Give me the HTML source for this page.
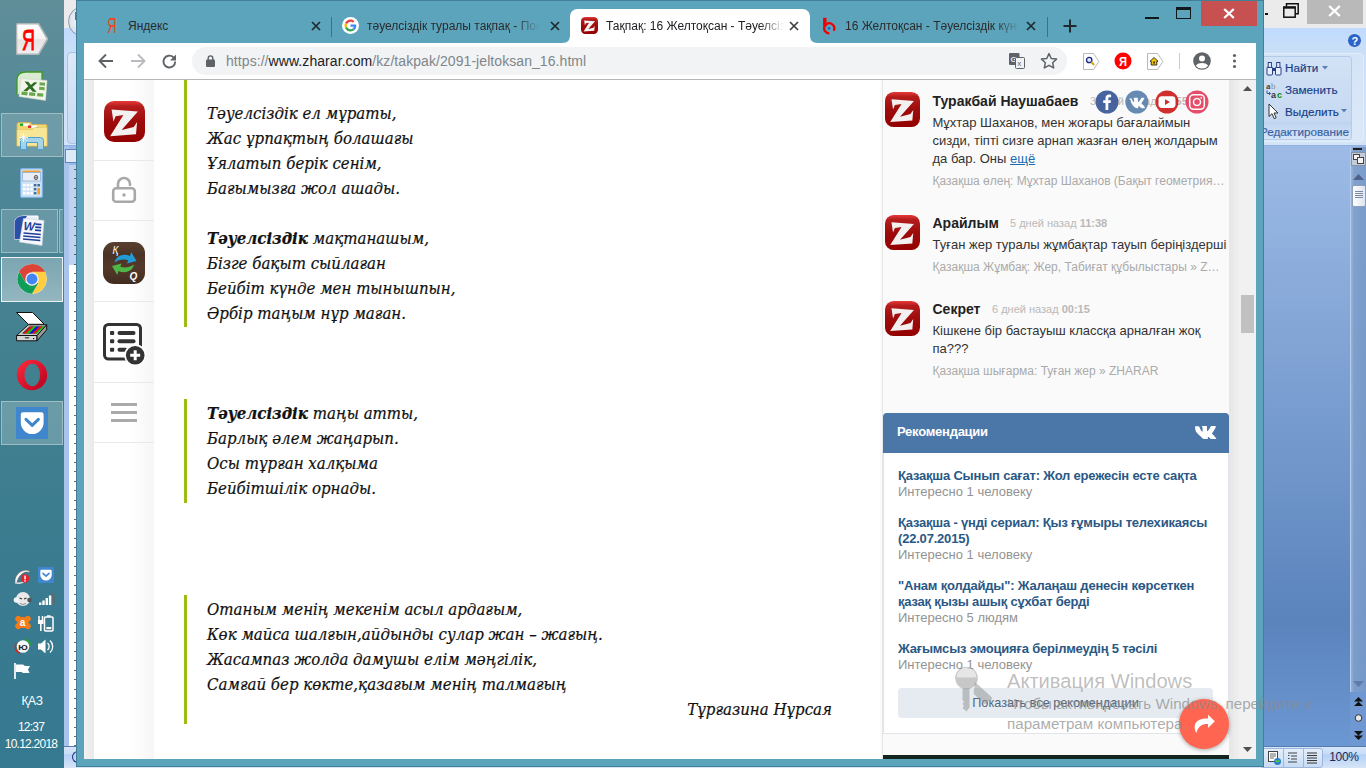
<!DOCTYPE html>
<html lang="kk">
<head>
<meta charset="utf-8">
<title>Тақпақ: 16 Желтоқсан - Тәуелсіздік күні</title>
<style>
*{box-sizing:border-box;margin:0;padding:0}
html,body{width:1366px;height:768px;overflow:hidden}
body{position:relative;font-family:"Liberation Sans",sans-serif;background:#6f96cc}
.abs{position:absolute}
/* ===== taskbar ===== */
#taskbar{left:0;top:0;width:64px;height:768px;background:linear-gradient(180deg,#5f8e99 0%,#4c8595 25%,#41808f 50%,#3a7b90 75%,#357990 100%)}
.tb-hl{left:1px;width:62px;height:45px;border:1px solid rgba(255,255,255,.35);background:rgba(255,255,255,.16)}
#taskbar .t{color:#fff;font-size:12px;width:64px;text-align:center;left:0;white-space:nowrap}
/* ===== word ===== */
#word{z-index:0;left:64px;top:0;width:1302px;height:768px;background:linear-gradient(180deg,#9dbbe6 146px,#5b84bd 620px,#6b97d2 746px)}
#w-title{left:0;top:0;width:1302px;height:28px;background:#ebebeb}
#w-ribbon{left:0;top:28px;width:1302px;height:118px;background:linear-gradient(180deg,#bfdbff 0,#c9dff8 20px,#d3e4f8 100%);border-bottom:1px solid #8db2e3}
#w-status{left:0;top:746px;width:1302px;height:22px;background:linear-gradient(180deg,#d7e6f9 0,#c7dcf8 35%,#b3d0f5 36%,#d7e5f7 100%);border-top:1px solid #567db0}
.wr{font-size:11.700px;margin-top:.3px;line-height:15px;color:#163d88;-webkit-text-stroke:.15px #163d88;white-space:nowrap}
/* ===== chrome ===== */
#chrome{left:76px;top:0;width:1188px;height:767px;background:#5ca3bc;box-shadow:inset 0 0 0 1px #417f96}
#toolbar{left:8px;top:43px;width:1172px;height:37px;background:#fff;border-bottom:1px solid #b6b6b6}
#omni{left:108px;top:4px;width:875px;height:28px;border-radius:14px;background:#f1f3f4}
#url{left:34px;top:5px;font-size:14px;line-height:18px;color:#80868b;white-space:nowrap;letter-spacing:.07px}
#url b{font-weight:normal;color:#202124}
.tab{top:9px;height:34px;font-size:12px;color:#2b2b2b;white-space:nowrap}
.tab .tt{position:absolute;top:9px;line-height:16px;overflow:hidden}
.tab .fade{-webkit-mask-image:linear-gradient(90deg,#000 0,#000 calc(100% - 24px),transparent 100%);mask-image:linear-gradient(90deg,#000 0,#000 calc(100% - 24px),transparent 100%)}
#page{left:8px;top:80px;width:1172px;height:679px;background:#fff;overflow:hidden}
/* page */
#lstrip{left:0;top:0;width:10px;height:679px;background:linear-gradient(90deg,#f2f2f2,#e9e9e9)}
#side{left:10px;top:0;width:60px;height:679px;background:linear-gradient(90deg,#fff 0,#fff 60%,#f6f6f6 100%)}
#side i{position:absolute;left:0;width:60px;height:1px;background:#e9e9e9}
.bar{left:100px;width:3px;background:#9bbd14}
.poem{left:123px;margin-top:0;-webkit-text-stroke:.2px #111;font:italic 16.7px/25px "DejaVu Serif Condensed","Liberation Serif",serif;color:#111;white-space:nowrap}
.poem b{font-weight:bold}
#rcol{left:796px;top:0;width:349px;height:679px;background:#fafafa}
.cm-name{font-weight:bold;font-size:14px;color:#222;white-space:nowrap}
.cm-date{font-size:11px;color:#b9b9b9;white-space:nowrap}
.cm-text{font-size:13px;line-height:18px;color:#333;white-space:nowrap}
.cm-src{font-size:12px;color:#aaa;white-space:nowrap}
.av{width:35px;height:35px}
#vk{left:799px;top:333px;width:346px;height:321px;background:#fff;border:1px solid #e1e5eb;border-top:none;border-radius:4px 4px 0 0}
#vk-h{left:-1px;top:0;width:346px;height:40px;background:#4a76a8;border-radius:4px 4px 0 0}
.vk-t{left:14px;font-weight:bold;font-size:13px;line-height:16px;color:#2a5885;letter-spacing:-.2px;white-space:nowrap}
.vk-s{left:14px;font-size:13px;line-height:16px;color:#939393;white-space:nowrap}
#sb{left:1155px;top:0;width:17px;height:679px;background:#f1f1f1}
</style>
</head>
<body>
<svg width="0" height="0" style="position:absolute"><defs>
<linearGradient id="zg" x1="0" y1="0" x2="0" y2="1"><stop offset="0" stop-color="#e83a3a"/><stop offset=".13" stop-color="#b51d1d"/><stop offset=".5" stop-color="#9d0c0c"/><stop offset="1" stop-color="#940000"/></linearGradient>
<g id="zlogo"><rect x="0" y="0" width="41" height="41" rx="10" fill="url(#zg)"/><path d="M7.600 8.500L33.900 10.400 17.600 28.900 29.800 25.900 33.100 21.100 32 33.300 6.100 35.200 19.400 14.100 11.600 15.200 9.400 20.400z" fill="#f3f0f0"/></g>
</defs></svg>
<div id="word" class="abs">
  <div id="w-title" class="abs">
    <div class="abs" style="left:4px;top:6px;width:31px;height:31px;border-radius:16px;background:radial-gradient(circle at 50% 45%,#fff 0,#e3e8f1 55%,#c3ccdc 100%);border:1px solid #8d99b0;z-index:2"></div><div class="abs" style="left:11px;top:12px;width:2px;height:8px;background:#d8491b;z-index:3"></div>
    <div class="abs" style="left:1243px;top:0;width:56px;height:24px;background:#b9b9b9"></div>
    <svg class="abs" style="left:1264px;top:5px" width="13" height="12" viewBox="0 0 13 12"><path d="M1.200 1l10.600 10M11.800 1L1.200 11" stroke="#fff" stroke-width="2.300" fill="none"/></svg>
    <svg class="abs" style="left:1219px;top:3px" width="16" height="15" viewBox="0 0 16 15"><path d="M3.500 3.500V.8h11.700v10h-3" fill="none" stroke="#111" stroke-width="1.500"/><rect x=".8" y="4" width="11.400" height="10.200" fill="#ebebeb" stroke="#111" stroke-width="1.500"/><path d="M.8 4.700h11.400" stroke="#111" stroke-width="2"/></svg>
    <div class="abs" style="left:1201px;top:13px;width:3px;height:2px;background:#111"></div>
  </div>
  <div id="w-ribbon" class="abs">
    <div class="abs" style="left:3px;top:24px;width:12px;height:92px;border:1px solid #a9c3e6;border-radius:4px;background:linear-gradient(180deg,#dce9f8,#c6daf3)"></div>
    <svg class="abs" style="left:1283px;top:5px" width="15" height="15" viewBox="0 0 15 15"><circle cx="7.500" cy="7.500" r="7" fill="#2c63c9" stroke="#dbe6f7" stroke-width="1"/><text x="4.400" y="11.500" font-family="Liberation Sans,sans-serif" font-weight="bold" font-size="11" fill="#fff">?</text></svg>
    <div class="abs" style="left:1190px;top:25px;width:110px;height:89px;border:1px solid #e4eefb;border-radius:4px;background:linear-gradient(180deg,#d4e4f7,#dbe8f8)"></div>
    <div class="abs" style="left:1190px;top:28px;width:98px;height:84px;border:1px solid #b4cbe9;border-radius:3px;background:linear-gradient(180deg,#d2e2f6 0,#c6d9f1 78%,#bed4ef 79%,#d5e4f7 100%)"></div>
    <!-- find -->
    <svg class="abs" style="left:1202px;top:33px" width="16" height="15" viewBox="0 0 16 15"><g fill="#eaf0fb" stroke="#27408b" stroke-width="1"><rect x="1" y="6" width="5.500" height="8" rx="1"/><rect x="9.500" y="6" width="5.500" height="8" rx="1"/><rect x="2.200" y="1.500" width="3.200" height="5"/><rect x="10.700" y="1.500" width="3.200" height="5"/></g><rect x="6.500" y="7" width="3" height="3" fill="#27408b"/></svg>
    <div class="abs wr" style="left:1221px;top:32px">Найти</div>
    <svg class="abs" style="left:1258px;top:38px" width="6" height="4" viewBox="0 0 6 4"><path d="M0 0h6L3 3.500z" fill="#5d7fb8"/></svg>
    <!-- replace -->
    <svg class="abs" style="left:1202px;top:54px" width="17" height="17" viewBox="0 0 17 17"><text x="0" y="7" font-family="Liberation Serif,serif" font-weight="bold" font-size="9" fill="#444">a</text><text x="5" y="7" font-family="Liberation Serif,serif" font-size="9" fill="#888">b</text><text x="5" y="15.500" font-family="Liberation Sans,sans-serif" font-weight="bold" font-size="9" fill="#333">a</text><text x="11" y="15.500" font-family="Liberation Sans,sans-serif" font-weight="bold" font-size="9" fill="#0a8a0a">c</text><path d="M1 8.500v3h3.500M3 10l1.500 1.500L3 13" stroke="#3a5a9a" stroke-width="1" fill="none"/></svg>
    <div class="abs wr" style="left:1221px;top:54px">Заменить</div>
    <!-- select -->
    <svg class="abs" style="left:1204px;top:75px" width="11" height="17" viewBox="0 0 11 17"><path d="M1 1v12.500l3-2.800 2.200 5 2-.9-2.200-4.800H10z" fill="#fff" stroke="#333" stroke-width="1"/></svg>
    <div class="abs wr" style="left:1221px;top:76px">Выделить</div>
    <svg class="abs" style="left:1277px;top:81px" width="6" height="4" viewBox="0 0 6 4"><path d="M0 0h6L3 3.500z" fill="#5d7fb8"/></svg>
    <div class="abs wr" style="left:1196px;top:96px;color:#3e6aaa">Редактирование</div>
  </div>
  <!-- left ruler strip -->
  <div class="abs" style="left:0;top:147px;width:5px;height:599px;background:#a9c4ea"></div>
  <div class="abs" style="left:5px;top:165px;width:8px;height:100px;background:#bfd3f0"></div>
  <div class="abs" style="left:5px;top:265px;width:8px;height:481px;background:#fff"></div>
  <div class="abs" style="left:5px;top:165px;left:10px;width:2px;height:581px;background:repeating-linear-gradient(180deg,transparent 0,transparent 4px,#444 4px,#444 5px,transparent 5px,transparent 9.450px);opacity:.8"></div>
  <div class="abs" style="left:1px;top:149px;width:14px;height:14px;border:1px solid #5f86c4;background:#dfeaf8"></div>
  <!-- right scrollbar -->
  <div class="abs" style="left:1286px;top:147px;width:16px;height:599px;background:linear-gradient(90deg,#9fbbe2 0,#7f9fcb 25%,#7699c8 100%);opacity:.9"></div>
  <div class="abs" style="left:1286px;top:147px;width:1px;height:599px;background:#b5cbea"></div>
  <div class="abs" style="left:1289px;top:148px;width:9px;height:2px;background:#1e1e1e"></div>
  <div class="abs" style="left:1287px;top:152px;width:15px;height:14px;background:#c5ccd8;border:1px solid #8492aa"></div><div class="abs" style="left:1289px;top:154px;width:7px;height:6px;background:#f4f4f4;border:1px solid #444"></div><div class="abs" style="left:1293px;top:157px;width:7px;height:7px;background:#f4f4f4;border:1px solid #444"></div>
  <svg class="abs" style="left:1289px;top:174px" width="11" height="6" viewBox="0 0 11 6"><path d="M0 6L5.500 0 11 6z" fill="#4f638a"/></svg>
  <div class="abs" style="left:1288px;top:185px;width:14px;height:22px;background:linear-gradient(90deg,#fdfdfd,#dfe5ee);border:1px solid #8c9fbd;border-radius:2px"></div>
  <div class="abs" style="left:1291px;top:191px;width:8px;height:7px;background:repeating-linear-gradient(180deg,#7a8aa5 0,#7a8aa5 1px,transparent 1px,transparent 2px)"></div>
  <svg class="abs" style="left:1289px;top:681px" width="11" height="6" viewBox="0 0 11 6"><path d="M0 0L5.500 6 11 0z" fill="#5f7aa8"/></svg>
  <div class="abs" style="left:1286px;top:692px;width:16px;height:54px;background:#6f98d3"></div>
  <svg class="abs" style="left:1290px;top:697px" width="9" height="44" viewBox="0 0 9 44"><path d="M0 4.500L4.500 0 9 4.500zM0 9L4.500 4.500 9 9z" fill="#111"/><circle cx="4.500" cy="21" r="3.300" fill="#e8e8e8" stroke="#333" stroke-width="1"/><path d="M0 34L4.500 38.500 9 34zM0 38.500L4.500 43 9 38.500z" fill="#111"/></svg>
  <div id="w-status" class="abs">
    <div class="abs" style="left:8px;top:4px;width:9px;height:12px;border:1.500px solid #1a2f8a;border-right:none;border-radius:6px 0 0 6px"></div>
    <div class="abs" style="left:1196px;top:1px;width:63px;height:20px;border:1px solid #9db7dc;border-radius:3px;background:linear-gradient(180deg,#e4eefa,#c9dcf5)"></div>
    <div class="abs" style="left:1219px;top:2px;width:1px;height:18px;background:#9db7dc"></div>
    <div class="abs" style="left:1239px;top:2px;width:1px;height:18px;background:#9db7dc"></div>
    <svg class="abs" style="left:1204px;top:4px" width="54" height="15" viewBox="0 0 54 15"><rect x=".5" y=".5" width="9" height="10" fill="#fff" stroke="#444"/><path d="M2 3h6M2 5h6M2 7h4" stroke="#666" stroke-width="1"/><circle cx="9.500" cy="10.500" r="3.500" fill="#2a7fd0"/><path d="M7.500 9.500q2 2 4 0" stroke="#6c3" stroke-width="1.200" fill="none"/><path d="M20 2h9M23 5h6M23 8h6M20 11h9" stroke="#444" stroke-width="1.200"/><path d="M20 4.500h1.500M20 7.500h1.500" stroke="#444" stroke-width="1"/><path d="M39 2h10M39 4.500h10M39 7h10M39 9.500h10M39 12h10" stroke="#333" stroke-width="1.200"/></svg>
    <div class="abs" style="left:1262px;top:2px;width:36px;text-align:center;font-size:12px;line-height:17px;color:#15285a;letter-spacing:-.3px">100%</div>
  </div>
</div>
<div id="taskbar" class="abs">
  <!-- highlights -->
  <div class="abs tb-hl" style="top:113px;height:44px"></div>
  <div class="abs tb-hl" style="top:209px;height:44px;width:57px"></div>
  <div class="abs tb-hl" style="top:209px;height:44px;left:59px;width:4px;border-right:none"></div>
  <div class="abs tb-hl" style="top:257px;height:45px;border:1px solid rgba(255,255,255,.85);background:linear-gradient(180deg,rgba(255,255,255,.28),rgba(255,255,255,.42))"></div>
  <div class="abs tb-hl" style="top:401px;height:44px;background:rgba(255,255,255,.22)"></div>
  <!-- yandex -->
  <svg class="abs" style="left:16px;top:23px" width="32" height="32" viewBox="0 0 32 32"><defs><linearGradient id="yg" x1="0" y1="0" x2="0" y2="1"><stop offset="0" stop-color="#fff"/><stop offset=".5" stop-color="#f4f4f4"/><stop offset=".52" stop-color="#e4e4e4"/><stop offset="1" stop-color="#efefef"/></linearGradient></defs><path d="M2 .7h20.500l9 15.300-9 15.300H2a1.500 1.500 0 0 1-1.500-1.500V2.200A1.500 1.500 0 0 1 2 .7z" fill="url(#yg)" stroke="#aeb4b7" stroke-width="1.600"/><text x="6" y="26.500" font-family="Liberation Sans,sans-serif" font-size="29" fill="#f00" stroke="#f00" stroke-width=".9" textLength="13" lengthAdjust="spacingAndGlyphs">Я</text></svg>
  <!-- excel -->
  <svg class="abs" style="left:16px;top:71px" width="32" height="31" viewBox="0 0 32 31"><path d="M1 24V9Q1 1 10 1H26V8" fill="#d9ecd2" stroke="#3f9b1f" stroke-width="1.300"/><path d="M5 7.500L31 9.500 29.500 29.500 3 25.500z" fill="#f1f5ea" stroke="#cfd8c4" stroke-width=".6"/><path d="M8.500 10.500l3.800.3 2.600 3.300 3.200-2.900 3.400.3-5.100 4.600 4.300 4.900-4.300-.4-2.400-3-3 2.600-3.700-.3 5.100-4.700z" fill="#2c6b22"/><g fill="#6aa84f"><rect x="23.500" y="11.500" width="5.500" height="3" transform="rotate(4 26 13)"/><rect x="23.200" y="16" width="5.500" height="3" transform="rotate(4 26 17)"/><rect x="5.500" y="20.800" width="6" height="3.300" transform="rotate(5 8 22)"/><rect x="13.200" y="21.500" width="6" height="3.300" transform="rotate(5 16 23)"/><rect x="21.200" y="22.200" width="6" height="3.300" transform="rotate(5 24 24)"/></g></svg>
  <!-- explorer -->
  <svg class="abs" style="left:16px;top:121px" width="32" height="30" viewBox="0 0 32 30"><path d="M1 3.500Q1 1.500 3 1.500h11.500l1.500 2h14Q31 3.500 31 5.500V25H1z" fill="#f1d674" stroke="#d5b24c" stroke-width=".8"/><rect x="4" y="2.500" width="9" height="2.400" fill="#fff"/><rect x="4" y="2.500" width="3.200" height="2.400" fill="#18a818"/><rect x="12" y="4.500" width="9" height="2.400" fill="#fff"/><rect x="12" y="4.500" width="3.200" height="2.400" fill="#d22"/><rect x="20" y="6.500" width="9" height="2.400" fill="#fff"/><rect x="20" y="6.500" width="3.200" height="2.400" fill="#1c7fe0"/><path d="M1 8.500h15.500l2-2H31V25H1z" fill="#f8e697" stroke="#e0c25c" stroke-width=".6"/><path d="M4.500 28.500V19.500Q4.500 16.500 7.500 16.500h17Q27.500 16.500 27.500 19.500V28.500H21.500V21.500H10.500V28.500z" fill="#9fd4ee" stroke="#4f9fd0" stroke-width="1" fill-opacity=".92"/><path d="M7.500 12v9M3 16.500h9M4.500 13.500l6 6M10.500 13.500l-6 6" stroke="#fff" stroke-width=".9" opacity=".9"/></svg>
  <!-- calc -->
  <svg class="abs" style="left:20px;top:168px" width="23" height="30" viewBox="0 0 23 30"><rect x=".6" y=".6" width="21.800" height="28.800" rx="1.500" fill="#cfe3f6" stroke="#7fb0e0" stroke-width="1.200"/><rect x="2.500" y="2.500" width="18" height="2" fill="#f2a33c"/><rect x="2.500" y="4.500" width="18" height="8.500" fill="#e6eff8" stroke="#8aa6c4" stroke-width=".7"/><text x="13.500" y="11.700" font-family="Liberation Mono,monospace" font-weight="bold" font-size="8" fill="#41506b">0</text><g fill="#fff"><rect x="3" y="16" width="2.600" height="2.400"/><rect x="6.600" y="16" width="2.600" height="2.400"/><rect x="10.200" y="16" width="2.600" height="2.400"/><rect x="3" y="20" width="2.600" height="2.400"/><rect x="6.600" y="20" width="2.600" height="2.400"/><rect x="10.200" y="20" width="2.600" height="2.400"/><rect x="3" y="24" width="2.600" height="2.400"/><rect x="6.600" y="24" width="2.600" height="2.400"/><rect x="10.200" y="24" width="2.600" height="2.400"/></g><g fill="#3f6f9f"><rect x="13.800" y="16" width="2.600" height="2.400"/><rect x="17.400" y="16" width="2.600" height="2.400"/><rect x="13.800" y="20" width="2.600" height="2.400"/><rect x="13.800" y="24" width="2.600" height="2.400"/></g><rect x="17.400" y="20" width="2.600" height="6.400" fill="#f29a2e"/></svg>
  <!-- word -->
  <svg class="abs" style="left:13px;top:215px" width="32" height="31" viewBox="0 0 32 31"><path d="M1.500 24V9Q1.500 1 10.500 1H25V24z" fill="#e9eef8" stroke="#fff" stroke-width="1"/><path d="M1.500 24V9Q1.500 1 10.500 1H14Q8 8 8.500 24z" fill="#2a4fa8"/><path d="M10.500 3.500L31 5.500 29 30.500 6.500 27z" fill="#f6f8fc" stroke="#cfd6e4" stroke-width=".6"/><text x="10.500" y="15.500" font-family="Liberation Sans,sans-serif" font-weight="bold" font-style="italic" font-size="12" fill="#1f3f9a" transform="rotate(4 16 12)">W</text><g stroke="#1f3f9a" stroke-width="1.700"><path d="M22.500 9.200l6 .5M22.300 12.200l6 .5M22 15.200l6 .5M10.500 18l17.300 1.500M10.200 21l17.300 1.500M10 24l17.300 1.500"/></g></svg>
  <!-- chrome -->
  <svg class="abs" style="left:17px;top:264px" width="30" height="30" viewBox="0 0 48 48"><circle cx="24" cy="24" r="23.500" fill="#fff"/><path d="M24 24L3.700 12.300A23.500 23.500 0 0 1 44.300 12.300z" fill="#db4437"/><path d="M24 .5A23.500 23.500 0 0 1 44.350 12.250H24z" fill="#db4437"/><path d="M3.650 12.250A23.500 23.500 0 0 1 44.350 12.250H24L13.800 29.900z" fill="#db4437"/><path d="M44.350 12.250A23.500 23.500 0 0 1 24 47.500L34.200 29.900 24 12.250z" fill="#ffcd40"/><path d="M24 47.500A23.500 23.500 0 0 1 3.650 12.250L13.800 29.900 34.200 29.900z" fill="#0f9d58"/><circle cx="24" cy="24" r="10.800" fill="#f1f1f1"/><circle cx="24" cy="24" r="8.700" fill="#4285f4"/></svg>
  <!-- scanner -->
  <svg class="abs" style="left:15px;top:311px" width="34" height="32" viewBox="0 0 34 32"><path d="M1.500 1.500h16l11.800 11.800H13.300z" fill="#fff" stroke="#111" stroke-width="1"/><path d="M1.600 24.500L13.200 13.800h18.500L22 24.500z" fill="#c9c9c9" stroke="#111" stroke-width="1"/><path d="M1.600 24.500H22v5.300H1.600z" fill="#d4d4d4" stroke="#111" stroke-width="1"/><path d="M22 24.500L31.700 13.800v5L22 29.800z" fill="#9a9a9a" stroke="#111" stroke-width="1"/><path d="M7 22.500l7.500-7h15L22 22.500z" fill="#222"/><path d="M8 22.500l7.500-7h3l-7.500 7z" fill="#e11"/><path d="M11 22.500l7.500-7h3l-7.500 7z" fill="#1c1"/><path d="M14 22.500l7.500-7h3l-7.500 7z" fill="#11e"/><path d="M17 22.500l7.500-7h3l-7.500 7z" fill="#e11"/><path d="M20 22.500l7.500-7h2L22 22.500z" fill="#1c1"/><path d="M10 26l1 1.500 1-1.500 1 1.500 1-1.500" stroke="#111" stroke-width=".7" fill="none"/><rect x="18" y="27" width="1.200" height="1.200" fill="#111"/></svg>
  <!-- opera -->
  <svg class="abs" style="left:16px;top:359px" width="32" height="32" viewBox="0 0 32 32"><defs><linearGradient id="og" x1="0" y1="0" x2="1" y2="1"><stop offset="0" stop-color="#ff2b3f"/><stop offset="1" stop-color="#b5001c"/></linearGradient></defs><path fill-rule="evenodd" d="M16 .8A15.200 15.200 0 1 1 16 31.200 15.200 15.200 0 0 1 16 .8zM16.500 4.800c-4.300 0-8 4.800-8 11.200s3.700 11.200 8 11.200 7.500-4.800 7.500-11.200S20.800 4.800 16.500 4.800z" fill="url(#og)"/></svg>
  <!-- pocket -->
  <svg class="abs" style="left:16px;top:407px" width="32" height="32" viewBox="0 0 32 32"><rect width="32" height="32" fill="#3f86cc"/><path d="M7 5.300h18.300a2.300 2.300 0 0 1 2.300 2.300v8a11.400 11.400 0 0 1-22.800 0v-8A2.300 2.300 0 0 1 7 5.300z" fill="#fff"/><path d="M10 12.300l6.200 6 6.200-6" stroke="#3f86cc" stroke-width="3" fill="none" stroke-linecap="round" stroke-linejoin="round"/></svg>
  <!-- tray -->
  <svg class="abs" style="left:12px;top:565px" width="46" height="116" viewBox="0 0 46 116">
    <path d="M3 17.500c-1-6 4-12 11-12.500 3 0 4.500 1.500 4 3-3.500-2.500-10.500 0-13 9.500z" fill="#f2f2f2" stroke="#555" stroke-width=".6"/><path d="M3 17.500c3 1.500 8 .5 11-2" stroke="#ddd" stroke-width="1.400" fill="none"/><circle cx="13" cy="13.500" r="4.200" fill="#e8202a"/><rect x="12.300" y="10.600" width="1.500" height="3.800" fill="#fff"/><rect x="12.300" y="15.200" width="1.500" height="1.400" fill="#fff"/>
    <rect x="26" y="2" width="16" height="16" fill="#3f86cc"/><path d="M29.500 4.700h9a1.200 1.200 0 0 1 1.200 1.200v4a5.700 5.700 0 0 1-11.400 0v-4a1.200 1.200 0 0 1 1.200-1.200z" fill="#fff"/><path d="M31 8.300l3 2.900 3-2.900" stroke="#3f86cc" stroke-width="1.600" fill="none" stroke-linecap="round"/>
    <circle cx="11" cy="34" r="7" fill="#e9e9e9"/><circle cx="4.500" cy="35" r="2.800" fill="#f4f4f4"/><circle cx="17.500" cy="35" r="2.300" fill="#555"/><path d="M7.500 33l2.500 1M14.500 33l-2.500 1" stroke="#333" stroke-width="1.300"/><path d="M8 38.500q3 2 6 0" stroke="#777" stroke-width=".8" fill="none"/>
    <g fill="#fff"><rect x="27" y="37.500" width="2.400" height="2.500"/><rect x="30.300" y="35.500" width="2.400" height="4.500"/><rect x="33.600" y="33" width="2.400" height="7"/><rect x="36.900" y="30.500" width="2.400" height="9.500"/></g><rect x="40.200" y="28" width="2.400" height="12" fill="#5e6a6e"/>
    <g transform="translate(11,57.500)" fill="#f47b16"><rect x="-9" y="-3" width="18" height="6" rx="3" transform="rotate(38)"/><rect x="-9" y="-3" width="18" height="6" rx="3" transform="rotate(-38)"/><circle r="5.500"/></g><text x="7.800" y="61" font-family="Liberation Sans,sans-serif" font-weight="bold" font-size="10" fill="#fff">a</text>
    <g fill="none" stroke="#fff" stroke-width="1.500"><rect x="32.500" y="52" width="8.500" height="14" rx="1"/><path d="M35 51h3.500"/><path d="M27 51v4M30.500 51v4"/></g><rect x="26" y="55" width="5.500" height="4" fill="#fff"/><rect x="28" y="59" width="1.600" height="7" fill="#fff"/><rect x="34.300" y="62" width="5" height="2.200" fill="#fff"/>
    <circle cx="11" cy="81.500" r="6.300" fill="#f6f6f6"/><path d="M4 78a7.600 7.600 0 0 0 4 10.500" stroke="#d22" stroke-width="1.400" fill="none"/><path d="M14 74.500a7.600 7.600 0 0 1 4.500 6" stroke="#2a2" stroke-width="1.400" fill="none"/><text x="6.300" y="84.500" font-family="Liberation Sans,sans-serif" font-weight="bold" font-size="8" fill="#222" textLength="9.500" lengthAdjust="spacingAndGlyphs">Ю</text>
    <path d="M26 78.500h3l4.500-4v14l-4.500-4h-3z" fill="#fff"/><path d="M35.500 78a4.500 4.500 0 0 1 0 7M38 75.500a8 8 0 0 1 0 12" stroke="#fff" stroke-width="1.300" fill="none"/>
    <path d="M3 98v16" stroke="#fff" stroke-width="1.700"/><path d="M4 99.500h7l2 1.500h5l-2 3.500 1.500 3.500H11l-1.500-1H4z" fill="#fff"/>
  </svg>
  <div class="abs t" style="top:692.500px;line-height:16px;letter-spacing:-.3px">ҚАЗ</div>
  <div class="abs t" style="top:719px;line-height:16px;letter-spacing:-.8px;left:-1px">12:37</div>
  <div class="abs t" style="top:736px;line-height:16px;letter-spacing:-.75px;left:-1px">10.12.2018</div>
</div>
<div id="chrome" class="abs">
  <div id="tabs">
    <!-- tab 1 -->
    <svg class="abs" style="left:31px;top:16px" width="11" height="19" viewBox="0 0 11 19"><text x="0.300" y="17" font-family="Liberation Sans,sans-serif" font-size="22.500" fill="#fc3f1d" textLength="9.500" lengthAdjust="spacingAndGlyphs">Я</text></svg>
    <div class="abs tab" style="left:52px;width:180px"><span class="tt" style="left:0;width:180px">Яндекс</span></div>
    <svg class="abs x" style="left:235px;top:21px" width="10" height="10" viewBox="0 0 10 10"><path d="M1 1l8 8M9 1l-8 8" stroke="#1f2a30" stroke-width="1.7" fill="none"/></svg>
    <div class="abs" style="left:255px;top:17px;width:1px;height:20px;background:#3f6f82"></div>
    <!-- tab 2 -->
    <svg class="abs" style="left:266px;top:17px" width="17" height="17" viewBox="0 0 48 48"><circle cx="24" cy="24" r="24" fill="#fff"/><path fill="#EA4335" d="M24 13.5c3.1 0 5.2 1.3 6.400 2.500l4.700-4.600C32.200 8.700 28.400 7 24 7 17.400 7 11.700 10.800 8.900 16.300l5.500 4.300C15.800 16.500 19.500 13.500 24 13.500z"/><path fill="#4285F4" d="M40.300 24.400c0-1.300-.1-2.300-.3-3.400H24v6.200h9.300c-.2 1.500-1.200 3.900-3.500 5.400l5.400 4.200c3.200-3 5.100-7.400 5.100-12.400z"/><path fill="#FBBC05" d="M14.400 27.400c-.4-1.100-.6-2.200-.6-3.400s.2-2.300.5-3.400l-5.500-4.300C7.700 18.700 7 21.300 7 24s.7 5.300 1.900 7.700l5.500-4.300z"/><path fill="#34A853" d="M24 41c4.600 0 8.500-1.500 11.300-4.100l-5.400-4.200c-1.400 1-3.400 1.700-5.900 1.700-4.500 0-8.300-3-9.600-7.100l-5.500 4.300C11.700 37.200 17.400 41 24 41z"/></svg>
    <div class="abs tab" style="left:291px;width:172px"><span class="tt fade" style="left:0;width:172px">тәуелсіздік туралы тақпақ - Поиск</span></div>
    <svg class="abs x" style="left:474px;top:21px" width="10" height="10" viewBox="0 0 10 10"><path d="M1 1l8 8M9 1l-8 8" stroke="#1f2a30" stroke-width="1.7" fill="none"/></svg>
    <!-- active tab -->
    <svg class="abs" style="left:486px;top:9px" width="256" height="34" viewBox="0 0 256 34"><path d="M0 34C6 34 8 31 8 26V8C8 3 11 0 16 0H240C245 0 248 3 248 8V26C248 31 250 34 256 34Z" fill="#fff"/></svg>
    <svg class="abs" style="left:505px;top:17px" width="17" height="17" viewBox="0 0 41 41"><use href="#zlogo"/></svg>
    <div class="abs tab" style="left:530px;width:178px;color:#202124"><span class="tt fade" style="left:0;width:178px">Тақпақ: 16 Желтоқсан - Тәуелсіздік күні</span></div>
    <svg class="abs x" style="left:713px;top:21px" width="10" height="10" viewBox="0 0 10 10"><path d="M1 1l8 8M9 1l-8 8" stroke="#3c4043" stroke-width="1.7" fill="none"/></svg>
    <!-- tab 4 -->
    <svg class="abs" style="left:746px;top:17px" width="14" height="18" viewBox="0 0 14 18"><path d="M2.800 .8v8.500" stroke="#f00000" stroke-width="3.400" fill="none"/><path d="M7.300 16.400A5.100 5.100 0 1 1 11.700 13.800" stroke="#f00000" stroke-width="2.300" fill="none"/><circle cx="7" cy="11.300" r="1.400" fill="#1464d8"/></svg>
    <div class="abs tab" style="left:769px;width:174px"><span class="tt fade" style="left:0;width:174px">16 Желтоқсан - Тәуелсіздік күні | Скачать</span></div>
    <svg class="abs x" style="left:950px;top:21px" width="10" height="10" viewBox="0 0 10 10"><path d="M1 1l8 8M9 1l-8 8" stroke="#1f2a30" stroke-width="1.700" fill="none"/></svg>
    <div class="abs" style="left:971px;top:17px;width:1px;height:20px;background:#3f6f82"></div>
    <svg class="abs" style="left:987px;top:19px" width="14" height="14" viewBox="0 0 14 14"><path d="M7 0.500v13M0.500 7h13" stroke="#1f2a30" stroke-width="2" fill="none"/></svg>
    <!-- window controls -->
    <div class="abs" style="left:1069px;top:17px;width:14px;height:2px;background:#10181c"></div>
    <div class="abs" style="left:1100px;top:7px;width:15px;height:12px;border:1px solid #10181c;border-top-width:3px"></div>
    <div class="abs" style="left:1125px;top:1px;width:56px;height:25px;background:#c75050"></div>
    <svg class="abs" style="left:1147px;top:8px" width="12" height="11" viewBox="0 0 12 11"><path d="M1.200 1l9.600 9M10.800 1l-9.600 9" stroke="#fff" stroke-width="2.300" fill="none"/></svg>
  </div>
  <div id="toolbar" class="abs">
    <svg class="abs" style="left:14px;top:10px" width="16" height="16" viewBox="0 0 16 16"><path d="M15 8H2M8 1.500L1.500 8 8 14.500" stroke="#5f6368" stroke-width="1.900" fill="none"/></svg>
    <svg class="abs" style="left:46px;top:10px" width="16" height="16" viewBox="0 0 16 16"><path d="M1 8h13M8 1.500L14.500 8 8 14.500" stroke="#b9bbbe" stroke-width="1.900" fill="none"/></svg>
    <svg class="abs" style="left:77px;top:10px" width="17" height="17" viewBox="0 0 17 17"><path d="M14.200 8.500a5.900 5.900 0 1 1-1.800-4.200" stroke="#5f6368" stroke-width="1.900" fill="none"/><path d="M15 1.500v6h-6z" fill="#5f6368"/></svg>
    <div id="omni" class="abs">
      <svg class="abs" style="left:14px;top:8px" width="9" height="12" viewBox="0 0 9 12"><rect x="0" y="4.500" width="9" height="7.500" rx="1.100" fill="#5f6368"/><path d="M2.200 5V3.200a2.300 2.300 0 0 1 4.600 0V5" stroke="#5f6368" stroke-width="1.400" fill="none"/></svg>
      <div id="url" class="abs">https://<b>www.zharar.com</b>/kz/takpak/2091-jeltoksan_16.html</div>
      <svg class="abs" style="left:817px;top:6px" width="16" height="16" viewBox="0 0 16 16"><rect x="0" y="0" width="10.500" height="12" rx="1" fill="#5f6368"/><text x="1.500" y="9" font-family="Liberation Sans,sans-serif" font-weight="bold" font-size="8" fill="#e8eaed">G</text><rect x="6.500" y="4.500" width="9" height="11" rx="1" fill="#f1f3f4" stroke="#5f6368" stroke-width="1"/><text x="8.300" y="13.300" font-family="Liberation Sans,sans-serif" font-size="8" fill="#5f6368">x</text></svg>
      <svg class="abs" style="left:848px;top:5px" width="18" height="17" viewBox="0 0 18 17"><path d="M9 1.600l2.250 4.900 5.300 .6-3.950 3.600 1.100 5.250L9 13.300l-4.700 2.650 1.100-5.250L1.450 7.100l5.300-.6z" stroke="#5f6368" stroke-width="1.500" fill="none" stroke-linejoin="round"/></svg>
    </div>
    <svg class="abs" style="left:999px;top:10px" width="17" height="17" viewBox="0 0 17 17"><path d="M0.500 0.500h10l5.500 8-5.500 8h-10z" fill="#fff" stroke="#b8b8b8"/><circle cx="6.200" cy="7" r="2.700" fill="#dfe9ff" stroke="#1a237e" stroke-width="1.300"/><path d="M8.200 9l3 3" stroke="#d9a400" stroke-width="1.800"/></svg>
    <svg class="abs" style="left:1030px;top:9px" width="18" height="18" viewBox="0 0 18 18"><circle cx="9" cy="9" r="8.500" fill="#f00"/><text x="5" y="13.500" font-family="Liberation Sans,sans-serif" font-weight="bold" font-size="12.500" fill="#fff" textLength="8" lengthAdjust="spacingAndGlyphs">Я</text></svg>
    <svg class="abs" style="left:1063px;top:10px" width="17" height="17" viewBox="0 0 17 17"><path d="M0.500 0.500h10l5.500 8-5.500 8h-10z" fill="#fff" stroke="#b8b8b8"/><path d="M3 8.300L7 4.500l4 3.800h-1.200v3.700H4.200V8.300z" fill="#f6c700" stroke="#222" stroke-width=".9"/><rect x="6.200" y="8.500" width="1.600" height="2" fill="#222"/></svg>
    <div class="abs" style="left:1095px;top:10px;width:1px;height:16px;background:#c9cbcf"></div>
    <svg class="abs" style="left:1109px;top:9px" width="18" height="18" viewBox="0 0 18 18"><circle cx="9" cy="9" r="8.800" fill="#5f6368"/><circle cx="9" cy="6.500" r="3" fill="#fff"/><path d="M2.800 13.800c1.300-2.200 3.800-2.900 6.200-2.900s4.900.7 6.200 2.900A7.300 7.300 0 0 1 9 16.600a7.300 7.300 0 0 1-6.200-2.800z" fill="#fff"/></svg>
    <svg class="abs" style="left:1148px;top:10px" width="5" height="16" viewBox="0 0 5 16"><circle cx="2.500" cy="2.500" r="1.600" fill="#5f6368"/><circle cx="2.500" cy="8" r="1.600" fill="#5f6368"/><circle cx="2.500" cy="13.500" r="1.600" fill="#5f6368"/></svg>
  </div>
  <div id="page" class="abs">
    <div id="lstrip" class="abs"></div>
    <div id="side" class="abs"><i style="top:80px"></i><i style="top:140px"></i><i style="top:221px"></i><i style="top:302px"></i><i style="top:362px"></i>
      <svg class="abs" style="left:10px;top:21px" width="41" height="41" viewBox="0 0 41 41"><use href="#zlogo"/></svg>
      <svg class="abs" style="left:17px;top:96px" width="26" height="28" viewBox="0 0 26 28"><rect x="2.200" y="12.200" width="21.600" height="13.600" rx="3" fill="none" stroke="#a8a8a8" stroke-width="2.600"/><path d="M7 12V8a6 6 0 0 1 12 0V9" fill="none" stroke="#a8a8a8" stroke-width="2.600" stroke-linecap="round"/><circle cx="13" cy="19" r="1.700" fill="#a8a8a8"/></svg>
      <svg class="abs" style="left:9px;top:162px" width="42" height="42" viewBox="0 0 42 42"><defs><linearGradient id="wd" x1="0" y1="0" x2="0" y2="1"><stop offset="0" stop-color="#5a4030"/><stop offset=".3" stop-color="#4a3325"/><stop offset=".6" stop-color="#54392a"/><stop offset="1" stop-color="#412c20"/></linearGradient></defs><rect width="42" height="42" rx="11" fill="url(#wd)"/><path d="M11.500 20.500c1.500-7 9.500-9.500 15.500-6.500l1.200-4 5.300 9-9.500 2.500 1.200-3.200c-4.500-1.500-9.500-.8-13.700 2.200z" fill="#219bd6"/><path d="M31 22.500c-1.500 7-9.500 9.500-15.500 6.500l-1.200 4-5.300-9 9.500-2.500-1.200 3.200c4.500 1.500 9.500.8 13.700-2.200z" fill="#4db848"/><text x="9.500" y="11.500" font-family="Liberation Sans,sans-serif" font-style="italic" font-size="10" fill="#fff">Қ</text><text x="26.500" y="38" font-family="Liberation Sans,sans-serif" font-style="italic" font-weight="bold" font-size="10" fill="#fff">Q</text></svg>
      <svg class="abs" style="left:8px;top:242px" width="44" height="44" viewBox="0 0 44 44"><rect x="2.500" y="2.500" width="36" height="34.500" rx="4" fill="none" stroke="#333" stroke-width="3"/><g fill="#333"><rect x="8" y="9" width="4.200" height="4" rx="1"/><rect x="8" y="17.300" width="4.200" height="4" rx="1"/><rect x="8" y="25.700" width="4.200" height="4" rx="1"/><rect x="15.500" y="9" width="18" height="4" rx="2"/><rect x="15.500" y="17.300" width="18" height="4" rx="2"/><rect x="15.500" y="25.700" width="10" height="4" rx="2"/></g><circle cx="33.200" cy="33.300" r="11" fill="#fff"/><circle cx="33.200" cy="33.300" r="9.300" fill="#333"/><path d="M33.200 28.300v10M28.200 33.300h10" stroke="#fff" stroke-width="3"/></svg>
      <div class="abs" style="left:17px;top:323px;width:26px;height:3px;background:#aaa"></div>
      <div class="abs" style="left:17px;top:331px;width:26px;height:3px;background:#aaa"></div>
      <div class="abs" style="left:17px;top:339px;width:26px;height:3px;background:#aaa"></div>
    </div>
    <div class="abs bar" style="top:0;height:247px"></div>
    <div class="abs bar" style="top:319px;height:104px"></div>
    <div class="abs bar" style="top:515px;height:129px"></div>
    <div class="abs poem" style="top:21px">Тәуелсіздік ел мұраты,<br>Жас ұрпақтың болашағы<br>Ұялатып берік сенім,<br>Бағымызға жол ашады.<br><br><b>Тәуелсіздік</b> мақтанашым,<br>Бізге бақыт сыйлаған<br>Бейбіт күнде мен тынышпын,<br>Әрбір таңым нұр маған.</div>
    <div class="abs poem" style="top:321px"><b>Тәуелсіздік</b> таңы атты,<br>Барлық әлем жаңарып.<br>Осы тұрған халқыма<br>Бейбітшілік орнады.</div>
    <div class="abs poem" style="top:517px">Отаным менің мекенім асыл ардағым,<br>Көк майса шалғын,айдынды сулар жан – жағың.<br>Жасампаз жолда дамушы елім мәңгілік,<br>Самғай бер көкте,қазағым менің талмағың</div>
    <div class="abs poem" style="top:617px;left:auto;right:424px">Тұрғазина Нұрсая</div>
    <div id="rcol" class="abs">
      <div class="abs" style="left:2px;top:0;width:1px;height:679px;background:#e6e6e6"></div>
      <!-- comment 1 -->
      <svg class="abs av" style="left:5px;top:12px" viewBox="0 0 41 41"><use href="#zlogo"/></svg>
      <div class="abs cm-name" style="left:52.500px;top:13px;line-height:16px">Туракбай Наушабаев</div>
      <div class="abs cm-date" style="left:210px;top:14px;line-height:14px">3 дней назад <b>10:55</b></div>
      <div class="abs cm-text" style="left:52.500px;top:34px">Мұхтар Шаханов, мен жоғары бағалаймын<br>сизди, тіпті сизге арнап жазған өлең жолдарым<br>да бар. Оны <u style="color:#1a6cb0">ещё</u></div>
      <div class="abs cm-src" style="left:52.500px;top:93px;line-height:16px">Қазақша өлең: Мұхтар Шаханов (Бақыт геометрия…</div>
      <!-- comment 2 -->
      <svg class="abs av" style="left:5px;top:135px" viewBox="0 0 41 41"><use href="#zlogo"/></svg>
      <div class="abs cm-name" style="left:52.500px;top:135px;line-height:16px">Арайлым</div>
      <div class="abs cm-date" style="left:130px;top:136px;line-height:14px">5 дней назад <b>11:38</b></div>
      <div class="abs cm-text" style="left:52.500px;top:156px">Туған жер туралы жұмбақтар тауып беріңіздерші</div>
      <div class="abs cm-src" style="left:52.500px;top:179px;line-height:16px">Қазақша Жұмбақ: Жер, Табиғат құбылыстары » Z…</div>
      <!-- comment 3 -->
      <svg class="abs av" style="left:5px;top:221px" viewBox="0 0 41 41"><use href="#zlogo"/></svg>
      <div class="abs cm-name" style="left:52.500px;top:221px;line-height:16px">Секрет</div>
      <div class="abs cm-date" style="left:112px;top:222px;line-height:14px">6 дней назад <b>00:15</b></div>
      <div class="abs cm-text" style="left:52.500px;top:242px">Кішкене бір бастауыш классқа арналған жоқ<br>па???</div>
      <div class="abs cm-src" style="left:52.500px;top:283px;line-height:16px">Қазақша шығарма: Туған жер » ZHARAR</div>
      <!-- social -->
      <svg class="abs" style="left:215px;top:10px;opacity:.93" width="114" height="24" viewBox="0 0 114 24">
        <circle cx="12" cy="12" r="11.500" fill="#3b5998"/><path d="M13.300 20v-7h2.300l.4-2.800h-2.700V8.500c0-.8.300-1.300 1.400-1.300h1.400V4.700c-.3 0-1.100-.1-2.100-.1-2.100 0-3.500 1.300-3.500 3.600v2H8.200V13h2.300v7z" fill="#fff"/>
        <circle cx="41.800" cy="12" r="11.500" fill="#5b82ad"/><path d="M34.500 8.200h2.500c.3 0 .5.200.6.500.6 1.700 1.500 3.100 1.900 3.100.2 0 .3-.1.300-.8V9.200c-.1-.9-.6-1-.6-1.300 0-.2.200-.3.400-.3h3.500c.4 0 .5.200.5.600v3.100c0 .4.200.5.300.5.200 0 .5-.1 1-.700 1.100-1.200 1.900-3.100 1.900-3.100.1-.2.300-.500.700-.500h2c.6 0 .7.300.6.600-.3 1.200-2.700 4.600-2.700 4.600-.2.300-.300.5 0 .8.200.3.900.9 1.400 1.400.9 1 1.500 1.800 1.700 2.300.2.600-.1.800-.6.800h-2.300c-.6 0-.9-.3-1.500-1-.700-.700-1.200-1.300-1.700-1.300-.3 0-.400.100-.400.800v1c0 .4-.1.500-1 .500-1.500 0-3.200-.9-4.400-2.600-1.800-2.500-2.300-4.400-2.300-4.800 0-.2.100-.400.500-.400z" fill="#fff" transform="translate(-0.700,0.200)"/>
        <circle cx="72" cy="12" r="11.500" fill="#cd201f"/><rect x="63.500" y="6.300" width="17" height="11.600" rx="3.400" fill="#fff"/><path d="M70 9.200v5.800l5-2.900z" fill="#cd201f"/>
        <circle cx="102" cy="12" r="11.500" fill="#e4405f"/><rect x="94.700" y="4.700" width="14.600" height="14.600" rx="4" fill="none" stroke="#fff" stroke-width="1.500"/><circle cx="102" cy="12" r="3.500" fill="none" stroke="#fff" stroke-width="1.500"/><circle cx="106.200" cy="7.800" r=".9" fill="#fff"/>
      </svg>
    </div>
    <!-- VK widget -->
    <div id="vk" class="abs">
      <div id="vk-h" class="abs"><span class="abs" style="left:14px;top:11px;font-weight:bold;font-size:13px;line-height:16px;color:#fff;letter-spacing:-.25px">Рекомендации</span>
        <svg class="abs" style="left:312px;top:13px" width="22" height="13" viewBox="0 0 22 13"><path d="M0 .3h3.600c.4 0 .6.200.8.700.9 2.500 2.300 4.700 2.900 4.700.2 0 .3-.1.300-.700V2.300C7.500.9 6.800.8 6.800.3 6.800.1 7 0 7.200 0h4.300c.4 0 .5.200.5.700v3.900c0 .4.200.6.300.6.200 0 .4-.1.900-.600 1.400-1.600 2.400-4 2.400-4 .1-.3.400-.6.800-.6H20c.8 0 1 .4.800.9-.3 1.500-3.500 5.900-3.500 5.900-.300.400-.400.600 0 1.100.3.400 1.200 1.200 1.800 1.900 1.100 1.300 2 2.300 2.200 3 .200.700-.1 1-.9 1h-3.100c-.8 0-1.100-.4-2-1.300-.8-.8-1.400-1.500-2-1.500-.4 0-.5.100-.5.800v1.300c0 .5-.2.700-1.400.700-2 0-4.300-1.200-5.900-3.500C1.100 6.900 .400 4.300.400 3.800 0 .8-.1.300 0 .3z" fill="#fff"/></svg>
      </div>
      <div class="abs vk-t" style="top:55px">Қазақша Сынып сағат: Жол ережесін есте сақта</div>
      <div class="abs vk-s" style="top:71px">Интересно 1 человеку</div>
      <div class="abs vk-t" style="top:102px">Қазақша - үнді сериал: Қыз ғұмыры телехикаясы<br>(22.07.2015)</div>
      <div class="abs vk-s" style="top:134px">Интересно 1 человеку</div>
      <div class="abs vk-t" style="top:165px">"Анам қолдайды": Жалаңаш денесін көрсеткен<br>қазақ қызы ашық сұхбат берді</div>
      <div class="abs vk-s" style="top:197px">Интересно 5 людям</div>
      <div class="abs vk-t" style="top:228px">Жағымсыз эмоцияға берілмеудің 5 тәсілі</div>
      <div class="abs vk-s" style="top:244px">Интересно 1 человеку</div>
      <div class="abs" style="left:14px;top:275px;width:315px;height:30px;border-radius:4px;background:#e5ebf1;text-align:center;font-size:12.700px;line-height:30px;color:#55677d;white-space:nowrap;">Показать все рекомендации</div>
    </div>
    <div class="abs" style="left:799px;top:675px;width:346px;height:4px;background:#14251f"></div>
    <div class="abs" style="left:1145px;top:0;width:10px;height:679px;background:linear-gradient(90deg,#e6e6e6,#efefef)"></div>
    <div id="sb" class="abs">
      <svg class="abs" style="left:4px;top:6px" width="9" height="5" viewBox="0 0 9 5"><path d="M0 5L4.500 0 9 5z" fill="#505050"/></svg>
      <div class="abs" style="left:2px;top:215px;width:13px;height:38px;background:#c1c1c1"></div>
      <svg class="abs" style="left:4px;top:667px" width="9" height="5" viewBox="0 0 9 5"><path d="M0 0L4.500 5 9 0z" fill="#505050"/></svg>
    </div>
    <!-- share fab -->
    <div class="abs" style="left:1095px;top:619px;width:50px;height:50px;border-radius:25px;background:#ff6550;box-shadow:0 1px 4px rgba(0,0,0,.35)"><svg class="abs" style="left:0.500px;top:0" width="50" height="50" viewBox="0 0 50 50"><path d="M28.100 15.700L34.800 22.300 28.100 29V25C22 24.800 18.500 27 16.300 34 13 27.500 14 19.500 28.100 19.600z" fill="#fff"/></svg></div>
  </div>
</div>
<!-- activation watermark -->
<div id="wm" class="abs" style="left:953px;top:664px;width:380px;height:80px;pointer-events:none">
  <svg class="abs" style="left:0;top:0" width="46" height="50" viewBox="0 0 46 50"><g fill="#8f8f8f" fill-opacity=".5"><path d="M22 18l17 15.500-1 4-3.500-.5-.5 3-3.500-.5-10-10z"/><circle cx="13.500" cy="14" r="11.300"/><path d="M9.500 24.500h7v19l-3 4-4-3.500 1.500-2-1.500-2 1.500-2-1.500-2z"/></g><path d="M3.500 13.500a10 10 0 0 1 20 0z" fill="#fff" fill-opacity=".55"/></svg>
  <div class="abs" style="left:54px;top:4px;font-size:20.100px;line-height:26px;color:rgba(158,158,158,.66);white-space:nowrap;letter-spacing:0">Активация Windows</div>
  <div class="abs" style="left:54px;top:30px;font-size:15.200px;line-height:20px;color:rgba(140,140,140,.72);white-space:nowrap">Чтобы активировать Windows, перейдите к<br>параметрам компьютера.</div>
</div>
</body>
</html>
